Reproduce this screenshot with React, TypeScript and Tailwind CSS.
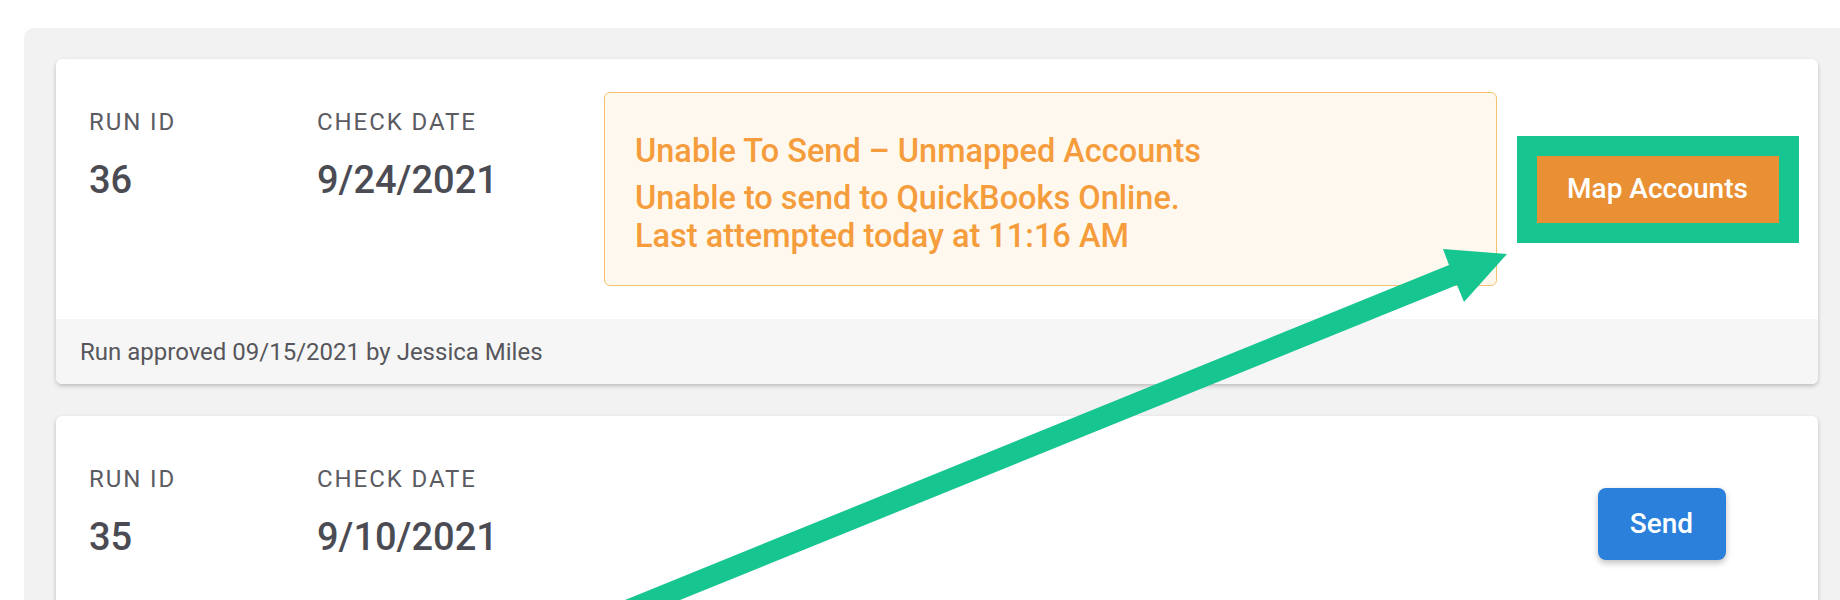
import React from 'react';

type Run = {
  id: string;
  checkDate: string;
  alert?: { title: string; lines: string[] };
  approved?: string;
};

const runs: Run[] = [
  {
    id: '36',
    checkDate: '9/24/2021',
    alert: {
      title: 'Unable To Send – Unmapped Accounts',
      lines: ['Unable to send to QuickBooks Online.', 'Last attempted today at 11:16 AM'],
    },
    approved: 'Run approved 09/15/2021 by Jessica Miles',
  },
  { id: '35', checkDate: '9/10/2021' },
];

function Field({ label, value, className = '' }: { label: string; value: string; className?: string }) {
  return (
    <div className={className}>
      <div className="text-[24px] leading-[28px] tracking-[0.08em] text-[#5b5b62]">{label}</div>
      <div className="mt-[22px] text-[38px] font-medium leading-[44px] text-[#4b4b53]">{value}</div>
    </div>
  );
}

function RunCard({ run }: { run: Run }) {
  return (
    <div className="overflow-hidden rounded-[6px] bg-white shadow-[0_2px_4px_rgba(0,0,0,0.22)]">
      <div className={`flex py-[33px] pl-[33px] ${run.alert ? '' : 'h-[216px]'}`}>
        <div className="flex w-[515px] self-start pt-[16px]">
          <Field label="RUN ID" value={run.id} className="w-[228px]" />
          <Field label="CHECK DATE" value={run.checkDate} />
        </div>

        {run.alert ? (
          <div className="flex h-[194px] w-[893px] flex-col justify-center rounded-[6px] border border-[#f5c16c] bg-[#fff8ee] pl-[30px] pt-[9px] text-[32.5px] font-medium leading-[38px] text-[#f59d3c]">
            <div className="mb-[9px]">{run.alert.title}</div>
            {run.alert.lines.map((line) => (
              <div key={line}>{line}</div>
            ))}
          </div>
        ) : (
          <div className="w-[893px]" />
        )}

        <div className="flex flex-1 items-center justify-center">
          {run.alert ? (
            <div className="bg-[#16c58f] p-[20px]">
              <button className="h-[67px] w-[242px] bg-[#ea9034] text-[28px] font-medium text-white">
                Map Accounts
              </button>
            </div>
          ) : (
            <button className="ml-[8px] h-[72px] w-[128px] rounded-[8px] bg-[#2a80da] text-[28px] font-medium text-white shadow-[0_3px_6px_rgba(0,0,0,0.25)]">
              Send
            </button>
          )}
        </div>
      </div>

      {run.approved && (
        <div className="flex h-[65px] items-center bg-[#f6f6f6] px-[24px] text-[24px] text-[#56565c]">
          {run.approved}
        </div>
      )}
    </div>
  );
}

export default function App() {
  return (
    <div className="relative h-[600px] w-full overflow-hidden bg-white font-['Roboto','Liberation_Sans',sans-serif]">
      <div className="ml-[24px] mt-[28px] w-[1840px] rounded-[10px] bg-[#f2f2f2] pb-[40px] pl-[32px] pt-[31px]">
        <div className="flex w-[1762px] flex-col gap-[32px]">
          {runs.map((run) => (
            <RunCard key={run.id} run={run} />
          ))}
        </div>
      </div>

      {/* annotation arrow */}
      <svg className="pointer-events-none absolute inset-0" width="1840" height="600" viewBox="0 0 1840 600">
        <polygon
          points="598,611 1449,265 1443,249 1507,254 1464,302 1457,285 606,630"
          fill="#16c58f"
        />
      </svg>
    </div>
  );
}
